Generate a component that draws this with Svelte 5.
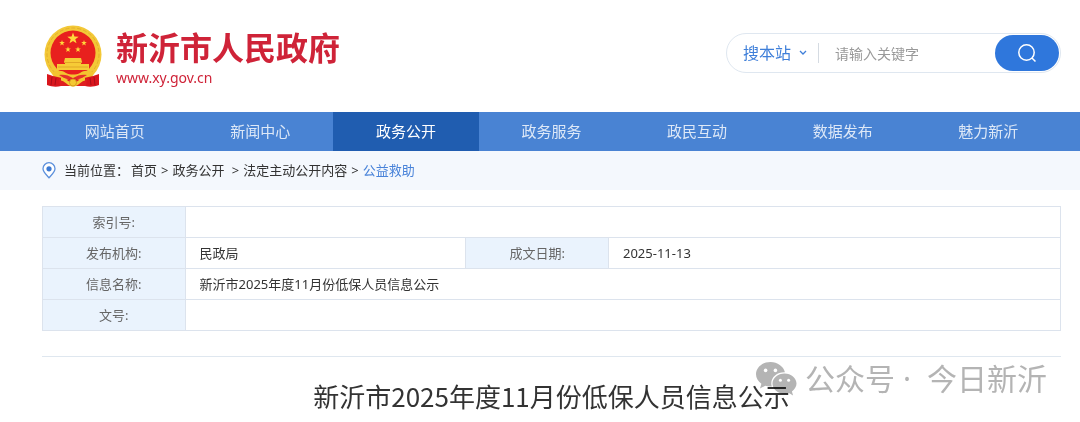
<script lang="ts">
	const navItems = ['网站首页', '新闻中心', '政务公开', '政务服务', '政民互动', '数据发布', '魅力新沂'];
	const activeItem = '政务公开';

	const crumbs = ['首页', '政务公开\u00a0', '法定主动公开内容', '公益救助'];

	const title = '新沂市2025年度11月份低保人员信息公示';

	let scope = $state('site');
	let keyword = $state('');

	const star = (cx: number, cy: number, r: number) =>
		Array.from({ length: 10 }, (_, i) => {
			const radius = i % 2 ? r * 0.4 : r;
			const angle = (Math.PI / 5) * i - Math.PI / 2;
			return `${(cx + radius * Math.cos(angle)).toFixed(2)},${(cy + radius * Math.sin(angle)).toFixed(2)}`;
		}).join(' ');
</script>

<div class="page">
	<header class="header">
		<a class="brand" href="#home">
			<svg class="emblem" viewBox="0 0 58 62" aria-hidden="true">
				<ellipse cx="29" cy="29.500" rx="28.500" ry="29" fill="#f3c837" />
				<circle cx="29" cy="29" r="26" fill="none" stroke="#e4b02a" stroke-width="1" stroke-dasharray="4 2" />
				<circle cx="29" cy="28" r="22.500" fill="#e8201e" />
				<polygon points={star(29, 13.5, 6)} fill="#ffd83b" />
				<polygon points={star(18, 18, 3)} fill="#ffd83b" />
				<polygon points={star(40, 18, 3)} fill="#ffd83b" />
				<polygon points={star(24, 24.500, 3)} fill="#ffd83b" />
				<polygon points={star(34, 24.500, 3)} fill="#ffd83b" />
				<path d="M21 33h16l1 4h-1v2h8v6H13v-6h8v-2h-1z" fill="#f6cb36" />
				<path d="M20 37.500h18M14 42h30" stroke="#e0a726" stroke-width="1" />
				<path d="M8 48c5-3 10-3 14 0 4 2 10 2 14 0 4-3 9-3 14 0l-3 6c-6-2-8 0-12 3H23c-4-3-7-5-12-3z" fill="#f3c42f" />
				<path d="M3 49l6 2 9 2-1 8c-4 1-9 1-14-1zM55 49l-6 2-9 2 1 8c4 1 9 1 14-1z" fill="#d9161d" />
				<path d="M15 50c5-1 9 0 14 3 5-3 9-4 14-3l-5 3-9 3-9-3z" fill="#e5302a" />
				<path d="M15 54l7 1 7-2 7 2 7-1-1 7H16z" fill="#df1e20" />
				<path d="M17 54c5 0 7 6 12 6s7-6 12-6" fill="none" stroke="#f4c832" stroke-width="3" />
				<circle cx="29" cy="57.500" r="3.500" fill="#f4c832" stroke="#d79c1d" stroke-width="1" />
				<path d="M8 52l-1 8M12 53l-1 7M50 52l1 8M46 53l1 7" stroke="#a90e18" stroke-width="1" />
			</svg>
			<span class="brand-text">
				<strong>新沂市人民政府</strong>
				<span class="domain">www.xy.gov.cn</span>
			</span>
		</a>

		<form class="search" onsubmit={(e) => e.preventDefault()}>
			<div class="scope">
				<select bind:value={scope} aria-label="搜索范围">
					<option value="site">搜本站</option>
				</select>
				<svg viewBox="0 0 8 6" aria-hidden="true">
					<path d="M1 1l3 3 3-3" fill="none" stroke="#3f7fd9" stroke-width="1.3" />
				</svg>
			</div>
			<input type="text" bind:value={keyword} placeholder="请输入关键字" aria-label="关键字" />
			<button type="submit" aria-label="搜索">
				<svg viewBox="0 0 20 20" aria-hidden="true">
					<circle cx="9.500" cy="9.500" r="7.700" />
					<path d="M15 15l3.500 3.500" />
				</svg>
			</button>
		</form>
	</header>

	<nav class="nav">
		{#each navItems as item}
			<a href="#nav" class:active={item === activeItem}>{item}</a>
		{/each}
	</nav>

	<div class="crumbs">
		<svg viewBox="0 0 14 17" aria-hidden="true">
			<path d="M7 15.800C4.500 12.800 1 10 1 6.700a6 6 0 0 1 12 0C13 10 9.500 12.800 7 15.800z" fill="#fff" stroke="#5b90dc" stroke-width="1.300" />
			<circle cx="7" cy="6.800" r="2.600" fill="#3c7ad3" />
		</svg>
		<span class="crumbs-label">当前位置：</span>
		<ol>
			{#each crumbs as crumb, i}
				<li>
					{#if i > 0}<span class="sep">&gt;</span>{/if}
					<a href="#crumb" class:current={i === crumbs.length - 1}>{crumb}</a>
				</li>
			{/each}
		</ol>
	</div>

	<main class="content">
		<table>
			<colgroup>
				<col class="col-label" />
				<col class="col-value" />
				<col class="col-label" />
				<col />
			</colgroup>
			<tbody>
				<tr>
					<th scope="row">索引号:</th>
					<td colspan="3"></td>
				</tr>
				<tr>
					<th scope="row">发布机构:</th>
					<td>民政局</td>
					<th scope="row">成文日期:</th>
					<td>2025-11-13</td>
				</tr>
				<tr>
					<th scope="row">信息名称:</th>
					<td colspan="3">{title}</td>
				</tr>
				<tr>
					<th scope="row">文号:</th>
					<td colspan="3"></td>
				</tr>
			</tbody>
		</table>

		<article>
			<h1>{title}</h1>
			<div class="watermark">
				<svg viewBox="0 0 41 34" aria-hidden="true">
					<path d="M14.500 0C6.500 0 0 5.400 0 12.300c0 3.900 2.100 7.200 5.400 9.500L4 26.500l5.200-2.800c1.700.5 3.500.8 5.300.8h1.300c-.4-1.100-.5-2.200-.5-3.300 0-6.200 5.800-11 12.900-11h.7C27.500 4.300 21.500 0 14.500 0z" />
					<path d="M40.500 21.600c0-5.600-5.400-10.100-12-10.100s-12 4.500-12 10.100 5.400 10.200 12 10.200c1.500 0 3-.3 4.400-.7l4.200 2.500-1.200-4.200c2.800-1.900 4.600-4.700 4.600-7.800z" />
					<g fill="#fff">
						<circle cx="9.600" cy="8.400" r="1.800" />
						<circle cx="19.400" cy="8.400" r="1.800" />
						<circle cx="24.400" cy="18.300" r="1.500" />
						<circle cx="32.600" cy="18.300" r="1.500" />
					</g>
				</svg>
				<span>公众号</span>
				<span class="dot">·</span>
				<span>今日新沂</span>
			</div>
		</article>
	</main>
</div>

<style>
	:global(body) {
		margin: 0;
		background: #fff;
		color: #333;
		font-family: 'Noto Sans', 'Noto Sans CJK SC', sans-serif;
		font-size: 13px;
	}

	a {
		color: inherit;
		text-decoration: none;
	}

	.header {
		display: flex;
		align-items: center;
		justify-content: space-between;
		padding: 24px 19px 24px 44px;
	}

	.brand {
		display: flex;
		align-items: center;
		gap: 14px;
		color: #cf2338;
	}

	.emblem {
		width: 58px;
		height: 64px;
	}

	.brand-text {
		display: flex;
		flex-direction: column;
		padding-top: 4px;
	}

	.brand strong {
		font-size: 32px;
		font-weight: 700;
		line-height: 40px;
	}

	.domain {
		font-size: 14px;
		line-height: 20px;
	}

	.search {
		box-sizing: border-box;
		display: flex;
		align-items: center;
		width: 335px;
		height: 40px;
		margin-bottom: 6px;
		padding: 1px 1px 1px 16px;
		border: 1px solid #dfe7f0;
		border-radius: 20px;
	}

	.scope {
		display: flex;
		align-items: center;
		gap: 7px;
		padding-right: 11px;
		border-right: 1px solid #d5dbe2;
	}

	.scope svg {
		width: 8px;
		height: 6px;
	}

	select {
		appearance: none;
		padding: 0;
		border: 0;
		background: none;
		color: #3f7fd9;
		font-family: inherit;
		font-size: 16px;
		line-height: 20px;
	}

	input {
		flex: 1;
		min-width: 0;
		padding: 0 16px;
		border: 0;
		outline: 0;
		background: none;
		font-family: inherit;
		font-size: 14px;
	}

	input::placeholder {
		color: #999;
	}

	button {
		display: flex;
		align-items: center;
		justify-content: center;
		width: 64px;
		height: 36px;
		padding: 0;
		border: 0;
		border-radius: 18px;
		background: #2f77dc;
	}

	button svg {
		width: 20px;
		height: 20px;
		fill: none;
		stroke: #fff;
		stroke-width: 1.5;
	}

	.nav {
		display: flex;
		padding: 0 19px 0 42px;
		background: #4983d3;
	}

	.nav a {
		flex: 1;
		color: #dde8f7;
		font-size: 15px;
		line-height: 39px;
		text-align: center;
	}

	.nav a.active {
		background: #205db0;
		color: #fff;
	}

	.crumbs {
		display: flex;
		align-items: center;
		padding: 0 19px 0 42px;
		background: #f4f8fd;
		line-height: 39px;
	}

	.crumbs svg {
		width: 14px;
		height: 17px;
		margin-right: 8px;
	}

	.crumbs ol,
	.crumbs li {
		display: flex;
		margin: 0;
		padding: 0;
		list-style: none;
	}

	.crumbs-label {
		margin-right: 2px;
	}

	.sep {
		margin: 0 4px;
	}

	.current {
		color: #4983d9;
	}

	.content {
		padding: 16px 19px 0 42px;
	}

	table {
		width: 100%;
		border-collapse: collapse;
		table-layout: fixed;
	}

	.col-label {
		width: 14%;
	}

	.col-value {
		width: 27.6%;
	}

	th,
	td {
		height: 30px;
		padding: 0 14px;
		border: 1px solid #dce3ed;
		line-height: 30px;
		text-align: left;
	}

	th {
		background: #eaf3fd;
		color: #666;
		font-weight: 400;
		text-align: center;
	}

	article {
		position: relative;
		margin-top: 25px;
		border-top: 1px solid #dfe7ef;
	}

	h1 {
		margin: 0;
		padding: 19px 0 24px;
		font-family: 'Noto Sans CJK SC', sans-serif;
		font-size: 26px;
		font-weight: 400;
		line-height: 40px;
		text-align: center;
	}

	/* overlaps the end of the title, which stays readable through it */
	.watermark {
		position: absolute;
		top: 2px;
		right: 14px;
		display: flex;
		align-items: center;
		gap: 8px;
		color: #b4b4b4;
		font-size: 30px;
		line-height: 40px;
		mix-blend-mode: multiply;
	}

	.watermark svg {
		width: 41px;
		height: 34px;
		fill: #b4b4b4;
	}

	.dot {
		padding-right: 8px;
	}
</style>
